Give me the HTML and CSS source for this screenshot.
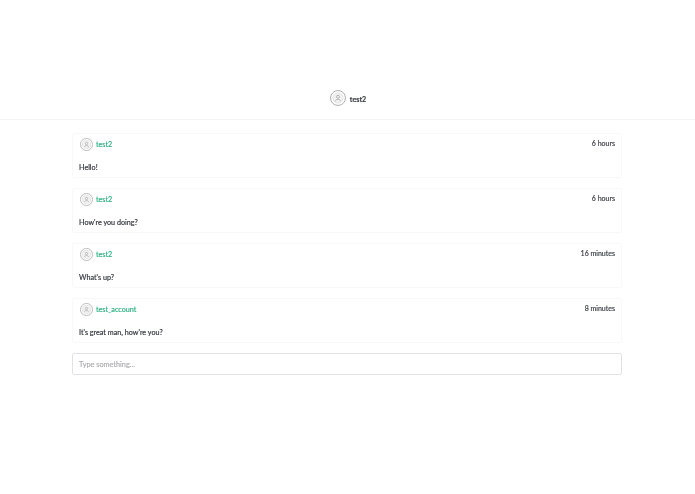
FILE: index.html
```html
<!DOCTYPE html>
<html lang="en">
<head>
<meta charset="utf-8">
<title>Chat</title>
<link rel="stylesheet" href="styles.css">
</head>
<body>
<svg class="defs" width="0" height="0" aria-hidden="true">
  <symbol id="avatar" viewBox="0 0 24 24">
    <circle cx="12" cy="12" r="11.2" fill="#fff" stroke="#a8a8a8" stroke-width="1.4"/>
    <circle cx="12" cy="12" r="7.6" fill="#f2f2f2" stroke="#cfcfcf" stroke-width=".8"/>
    <circle cx="12" cy="10.2" r="2.2" fill="none" stroke="#949494" stroke-width="1"/>
    <path d="M8 16.8c.6-2 2.2-2.8 4-2.8s3.4.8 4 2.8" fill="none" stroke="#949494" stroke-width="1"/>
  </symbol>
</svg>
<header class="topbar">
  <svg class="avatar avatar-lg"><use href="#avatar"/></svg>
  <span class="topbar-name">test2</span>
</header>
<main class="chat">
  <article class="msg">
    <div class="msg-head">
      <div class="msg-user"><svg class="avatar"><use href="#avatar"/></svg><span class="msg-name">test2</span></div>
      <time class="msg-time">6 hours</time>
    </div>
    <p class="msg-text">Hello!</p>
  </article>
  <article class="msg">
    <div class="msg-head">
      <div class="msg-user"><svg class="avatar"><use href="#avatar"/></svg><span class="msg-name">test2</span></div>
      <time class="msg-time">6 hours</time>
    </div>
    <p class="msg-text">How're you doing?</p>
  </article>
  <article class="msg">
    <div class="msg-head">
      <div class="msg-user"><svg class="avatar"><use href="#avatar"/></svg><span class="msg-name">test2</span></div>
      <time class="msg-time">16 minutes</time>
    </div>
    <p class="msg-text">What's up?</p>
  </article>
  <article class="msg">
    <div class="msg-head">
      <div class="msg-user"><svg class="avatar"><use href="#avatar"/></svg><span class="msg-name">test_account</span></div>
      <time class="msg-time">8 minutes</time>
    </div>
    <p class="msg-text">It's great man, how're you?</p>
  </article>
  <input class="composer" type="text" placeholder="Type something...">
</main>
</body>
</html>
```
FILE: styles.css
```css
* { box-sizing: border-box; }
html, body { margin: 0; padding: 0; background: #fff; }
body { font-family: "Lato", "Liberation Sans", sans-serif; font-size: 7.2px; color: #33363d; -webkit-text-stroke: .18px; }
.defs { position: absolute; }
.topbar, .chat { will-change: transform; }
.topbar {
  height: 120px;
  padding: 0 0 13px 1px;
  border-bottom: 1px solid #f4f4f4;
  display: flex;
  align-items: flex-end;
  justify-content: center;
  gap: 4px;
}
.topbar-name { font-weight: 700; font-size: 7.2px; line-height: 16px; color: #3f4249; margin-bottom: -2px; }
.avatar { width: 13px; height: 13px; display: block; flex: none; margin-left: 1px; }
.avatar-lg { width: 16px; height: 16px; margin-left: 0; }
.chat {
  width: 550px;
  margin: 13px 0 0 72px;
  display: flex;
  flex-direction: column;
  gap: 10px;
}
.msg {
  height: 45px;
  padding: 4px 6px 0 6px;
  border: 1px solid #f8f8f8;
  border-radius: 2px;
}
.msg-head { display: flex; justify-content: space-between; align-items: flex-start; }
.msg-user { display: flex; align-items: center; gap: 3px; }
.msg-name { color: #2fb086; font-size: 7.2px; }
.msg-time { font-size: 7px; line-height: 10px; color: #3f4249; }
.msg-text { margin: 12px 0 0; font-size: 7.2px; line-height: 10px; color: #33363d; }
.composer {
  width: 100%;
  height: 22px;
  padding: 0 6px;
  border: 1px solid #e2e2e6;
  border-radius: 2px;
  outline: none;
  font: 7.3px "Lato", "Liberation Sans", sans-serif;
  color: #33363d;
}
.composer::placeholder { color: #aeaeb2; opacity: 1; }
```
